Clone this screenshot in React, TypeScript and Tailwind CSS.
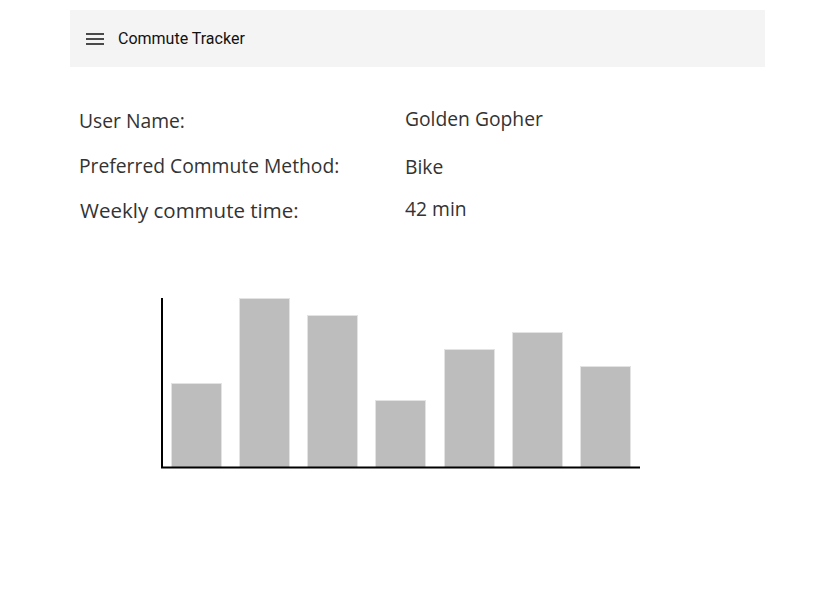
const BARS = [
  { x: 171, top: 383 },
  { x: 239, top: 298 },
  { x: 307, top: 315 },
  { x: 375, top: 400 },
  { x: 444, top: 349 },
  { x: 512, top: 332 },
  { x: 580, top: 366 },
];

const ROWS = [
  { label: "User Name:", value: "Golden Gopher", cls: "h-[45px]", lx: "text-[19.3px]", vy: "-mt-[2px]" },
  { label: "Preferred Commute Method:", value: "Bike", cls: "h-[44px]", lx: "text-[19.3px]", vy: "mt-px" },
  { label: "Weekly commute time:", value: "42 min", cls: "h-[44px]", lx: "pl-px text-[20.5px]", vy: "-mt-[1px]" },
];

export default function App() {
  return (
    <div className="min-h-[593px] w-[815px] bg-white pt-[10px]">
      <header className="ml-[70px] flex h-[57px] w-[695px] items-center bg-[#f4f4f4] pl-[16px] font-['Roboto',sans-serif]">
        <svg width="18" height="12" viewBox="0 0 18 12" className="text-[#4a4a4a]">
          <rect x="0" y="0" width="18" height="2" fill="currentColor" />
          <rect x="0" y="5" width="18" height="2" fill="currentColor" />
          <rect x="0" y="10" width="18" height="2" fill="currentColor" />
        </svg>
        <span className="ml-[14px] text-[16px] text-[#111]">Commute Tracker</span>
      </header>

      <div className="mt-[40px] pl-[79px] font-['Open_Sans',sans-serif] text-[19.3px] leading-[28px] text-[#333]">
        {ROWS.map((r) => (
          <div key={r.label} className={`flex items-start ${r.cls}`}>
            <div className={`w-[326px] ${r.lx}`}>{r.label}</div>
            <div className={r.vy}>{r.value}</div>
          </div>
        ))}
      </div>

      <svg width="815" height="250" viewBox="0 240 815 250" className="block">
        {BARS.map((b) => (
          <rect
            key={b.x}
            x={b.x + 0.5}
            y={b.top + 0.5}
            width={50}
            height={467 - b.top}
            fill="#bdbdbd"
            stroke="#e3e3e3"
            strokeWidth={1}
          />
        ))}
        <line x1="162" y1="298" x2="162" y2="468" stroke="#000" strokeWidth="2" />
        <line x1="161" y1="467.5" x2="640" y2="467.5" stroke="#000" strokeWidth="2" />
      </svg>
    </div>
  );
}
